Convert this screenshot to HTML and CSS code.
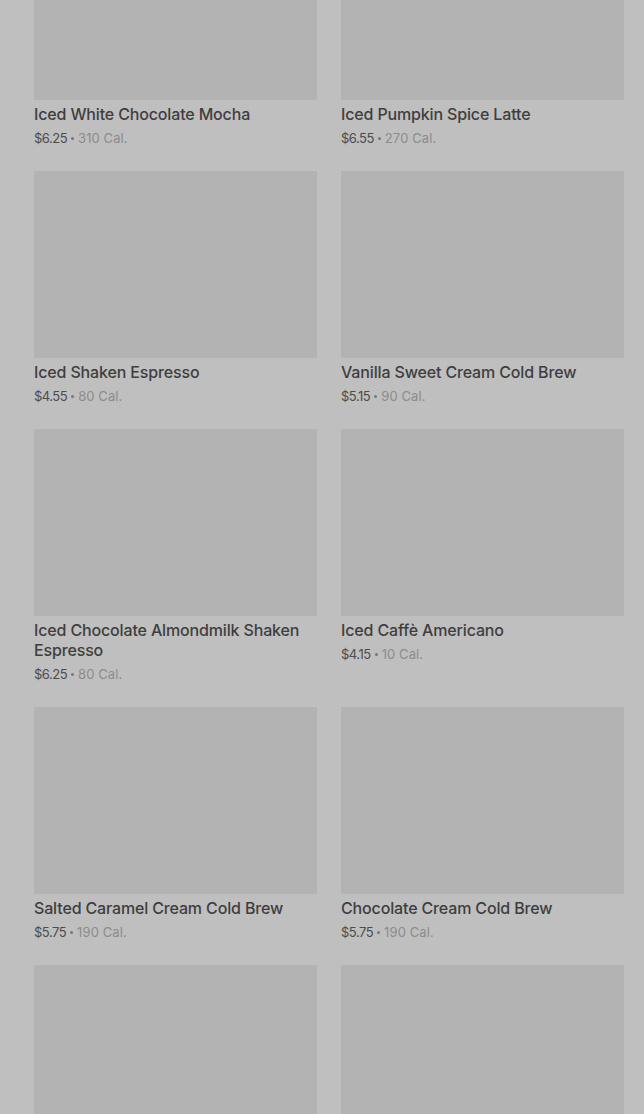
FILE: index.html
```html
<!DOCTYPE html>
<html lang="en">
<head>
<meta charset="utf-8">
<title>Menu</title>
<link rel="stylesheet" href="styles.css">
</head>
<body>
<main class="page">
  <div class="grid">
    <div class="card"><div class="thumb"></div><div class="name">Iced White Chocolate Mocha</div><div class="meta"><span class="price">$6.25</span><span class="dot"></span><span class="cal">310 Cal.</span></div></div>
    <div class="card"><div class="thumb"></div><div class="name">Iced Pumpkin Spice Latte</div><div class="meta"><span class="price">$6.55</span><span class="dot"></span><span class="cal">270 Cal.</span></div></div>
    <div class="card"><div class="thumb"></div><div class="name">Iced Shaken Espresso</div><div class="meta"><span class="price">$4.55</span><span class="dot"></span><span class="cal">80 Cal.</span></div></div>
    <div class="card"><div class="thumb"></div><div class="name">Vanilla Sweet Cream Cold Brew</div><div class="meta"><span class="price">$5.15</span><span class="dot"></span><span class="cal">90 Cal.</span></div></div>
    <div class="card"><div class="thumb"></div><div class="name">Iced Chocolate Almondmilk Shaken Espresso</div><div class="meta"><span class="price">$6.25</span><span class="dot"></span><span class="cal">80 Cal.</span></div></div>
    <div class="card"><div class="thumb"></div><div class="name">Iced Caffè Americano</div><div class="meta"><span class="price">$4.15</span><span class="dot"></span><span class="cal">10 Cal.</span></div></div>
    <div class="card"><div class="thumb"></div><div class="name">Salted Caramel Cream Cold Brew</div><div class="meta"><span class="price">$5.75</span><span class="dot"></span><span class="cal">190 Cal.</span></div></div>
    <div class="card"><div class="thumb"></div><div class="name">Chocolate Cream Cold Brew</div><div class="meta"><span class="price">$5.75</span><span class="dot"></span><span class="cal">190 Cal.</span></div></div>
    <div class="card"><div class="thumb"></div></div>
    <div class="card"><div class="thumb"></div></div>
  </div>
</main>
</body>
</html>
```

FILE: styles.css
```css
html, body {
  margin: 0;
  padding: 0;
  background: #bfbfbf;
  height: 100%;
  overflow: hidden;
}
body {
  font-family: Inter, "Noto Sans", "Liberation Sans", sans-serif;
}
.page {
  padding: 0 20px 0 34px;
}
.grid {
  display: grid;
  grid-template-columns: 283px 283px;
  column-gap: 24px;
  margin-top: -87px;
}
.card {
  padding-bottom: 25px;
}
.thumb {
  height: 187px;
  background: #b3b3b3;
}
.name {
  margin-top: 4px;
  font-size: 16px;
  line-height: 20px;
  font-weight: 500;
  color: #3e3e3e;
  letter-spacing: -0.15px;
}
.meta {
  margin-top: 4px;
  height: 18px;
  box-sizing: border-box;
  padding-top: 1px;
  display: flex;
  align-items: center;
  font-size: 13px;
  line-height: 16px;
  color: #8c8c8c;
}
.price {
  color: #4c4c4c;
  letter-spacing: -0.5px;
}
.cal {
  letter-spacing: 0.1px;
}
.dot {
  width: 3px;
  height: 3px;
  border-radius: 50%;
  background: #777;
  margin: 1px 4px 0 4px;
}
```
